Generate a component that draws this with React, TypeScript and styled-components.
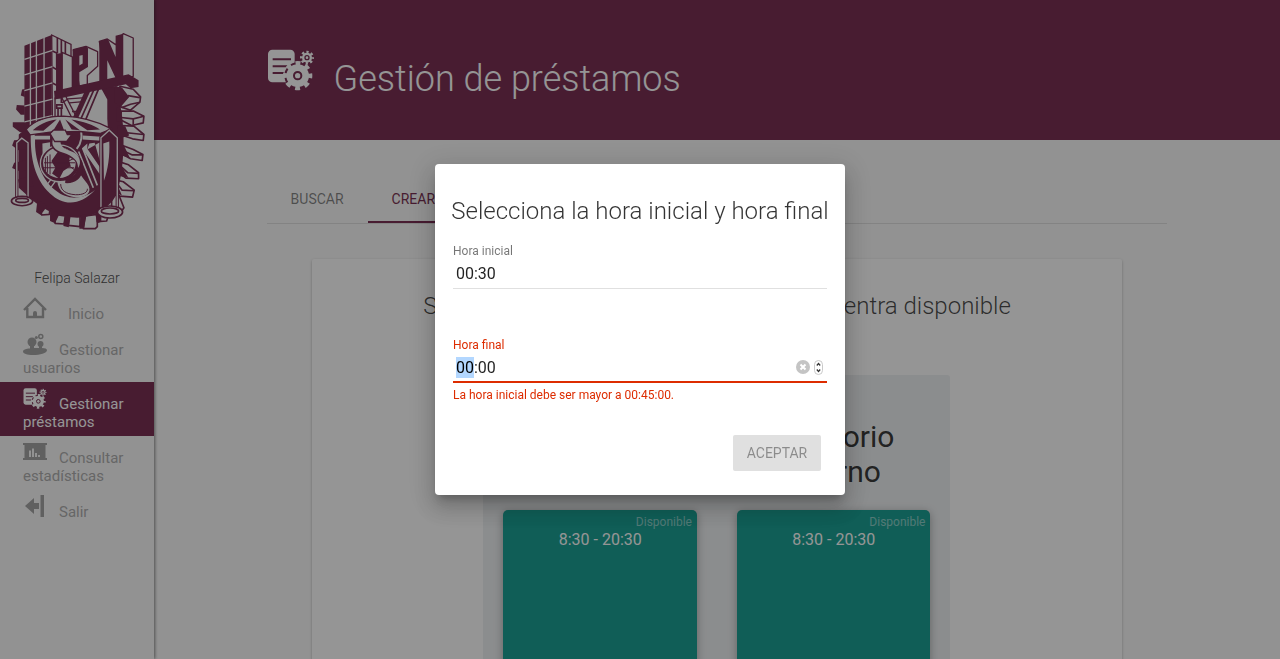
import React, { useEffect, useRef, useState } from "react";
import styled, { createGlobalStyle, css } from "styled-components";

const guinda = "#6b1740";
const paper = "#fafafa";
const danger = "#dd2c00";

const GlobalStyle = createGlobalStyle`
  *, *::before, *::after { box-sizing: border-box; }
  body {
    margin: 0;
    overflow: hidden;
    font-family: Roboto, "Liberation Sans", sans-serif;
    color: rgba(0, 0, 0, 0.87);
    background: ${paper};
  }
  h1, h2, h3, p { margin: 0; font-weight: 400; }
`;

const Shell = styled.div`
  display: grid;
  grid-template-columns: 154px 1fr;
  height: 100vh;
  overflow: hidden;
`;

const Sidebar = styled.aside`
  display: flex;
  flex-direction: column;
  background: ${paper};
  box-shadow: 1px 0 3px rgba(0, 0, 0, 0.5);
  z-index: 1;
`;

const LogoBox = styled.div`
  display: flex;
  justify-content: center;
  padding: 33px 0 37px;
`;

const UserName = styled.p`
  font-size: 14px;
  font-weight: 300;
  line-height: 20px;
  text-align: center;
  color: #3c3c3c;
`;

const Nav = styled.nav`
  display: flex;
  flex-direction: column;
  padding-top: 4px;
`;

const NavItem = styled.a<{ $active?: boolean; $wide?: boolean }>`
  padding: 5px 20px 5px 23px;
  font-size: 15px;
  line-height: 18px;
  text-decoration: none;
  color: ${(p) => (p.$active ? "#fff" : "#a6a6a6")};
  background: ${(p) => (p.$active ? guinda : "transparent")};
  svg {
    width: 24px;
    height: 24px;
    margin-right: ${(p) => (p.$wide ? 21 : 12)}px;
    vertical-align: -2px;
    color: ${(p) => (p.$active ? "#fff" : "#9a9a9a")};
  }
`;

const Main = styled.main`
  min-width: 0;
  overflow: hidden;
`;

const Banner = styled.header`
  height: 140px;
  padding: 49px 10% 0;
  display: flex;
  gap: 19px;
  color: #fff;
  background: ${guinda};
  svg { width: 48px; height: 44px; flex: none; }
`;

const BannerTitle = styled.h1`
  padding-top: 7px;
  font-size: 36px;
  font-weight: 300;
  line-height: 46px;
`;

const Content = styled.div`
  width: 80%;
  margin: 0 auto;
  padding-top: 35px;
`;

const Tabs = styled.div`
  display: flex;
  border-bottom: 1px solid #dcdcdc;
`;

const Tab = styled.button<{ $active?: boolean }>`
  height: 48px;
  padding: 2px 24px 0;
  border: 0;
  border-bottom: 2px solid ${(p) => (p.$active ? guinda : "transparent")};
  background: none;
  font: 400 14px/20px Roboto, sans-serif;
  color: ${(p) => (p.$active ? guinda : "rgba(0, 0, 0, 0.54)")};
`;

const Card = styled.section`
  width: 90%;
  margin: 35px auto 0;
  padding: 30px 0;
  display: flex;
  flex-direction: column;
  align-items: center;
  gap: 52px;
  border-radius: 2px;
  background: #fff;
  box-shadow: 0 1px 3px rgba(0, 0, 0, 0.3);
`;

const CardTitle = styled.h2`
  font-size: 24px;
  font-weight: 300;
  line-height: 34px;
  color: rgba(0, 0, 0, 0.8);
  white-space: nowrap;
`;

const Rooms = styled.div`
  width: 467px;
  padding: 44px 20px 0;
  display: grid;
  grid-template-columns: 1fr 1fr;
  gap: 40px;
  border-radius: 3px;
  background: #eceff1;
`;

const Room = styled.article`
  display: flex;
  flex-direction: column;
  align-items: stretch;
  gap: 21px;
`;

const RoomName = styled.h3`
  padding: 0 30px;
  font-size: 30px;
  line-height: 35px;
  text-align: center;
`;

const Slot = styled.div`
  height: 400px;
  padding: 4px 5px;
  border-radius: 5px;
  color: #fff;
  background: #009688;
  box-shadow: 0 2px 8px rgba(0, 0, 0, 0.35);
  text-align: center;
`;

const SlotState = styled.p`
  font-size: 12px;
  line-height: 16px;
  text-align: right;
  color: rgba(255, 255, 255, 0.5);
`;

const SlotTime = styled.p`
  font-size: 16px;
  line-height: 20px;
`;

const Scrim = styled.div`
  position: fixed;
  inset: 0;
  z-index: 5;
  display: flex;
  align-items: center;
  justify-content: center;
  background: rgba(33, 33, 33, 0.48);
`;

const Dialog = styled.form`
  width: 410px;
  max-width: 90vw;
  padding: 29px 18px 24px;
  border-radius: 4px;
  background: #fff;
  box-shadow: 0 7px 8px -4px rgba(0, 0, 0, 0.2), 0 13px 19px 2px rgba(0, 0, 0, 0.14),
    0 5px 24px 4px rgba(0, 0, 0, 0.12);
`;

const DialogTitle = styled.h2`
  margin: 0 -10px;
  font-size: 24px;
  font-weight: 300;
  line-height: 36px;
  text-align: center;
  white-space: nowrap;
  color: rgba(0, 0, 0, 0.8);
`;

const Field = styled.div<{ $invalid?: boolean }>`
  height: 94px;
  padding-top: 14px;
  label {
    display: block;
    font-size: 12px;
    line-height: 16px;
    color: ${(p) => (p.$invalid ? danger : "rgba(0, 0, 0, 0.54)")};
  }
`;

const InputRow = styled.div<{ $invalid?: boolean }>`
  display: flex;
  align-items: center;
  height: 30px;
  padding-right: 4px;
  border-bottom: ${(p) => (p.$invalid ? css`2px solid ${danger}` : css`1px solid #e0e0e0`)};
`;

const TimeInput = styled.input`
  flex: 1;
  min-width: 0;
  height: 21px;
  padding: 0 3px;
  border: 0;
  outline: 0;
  background: none;
  font: 400 16px/21px Roboto, sans-serif;
  color: rgba(0, 0, 0, 0.87);
  &::selection { background: #b3d7ff; color: #000; }
`;

const IconButton = styled.button`
  display: flex;
  margin-left: 4px;
  padding: 0;
  border: 0;
  background: none;
`;

const ErrorText = styled.p`
  font-size: 12px;
  line-height: 14px;
  padding-top: 5px;
  color: ${danger};
`;

const Actions = styled.div`
  display: flex;
  justify-content: flex-end;
  padding: 18px 6px 0;
`;

const Accept = styled.button`
  height: 36px;
  width: 88px;
  padding: 0;
  border: 0;
  border-radius: 2px;
  background: #e0e0e0;
  font: 400 14px/36px Roboto, sans-serif;
  color: rgba(0, 0, 0, 0.38);
`;

const CogsIcon = ({ hole }: { hole: string }) => (
  <svg viewBox="0 0 144 132" aria-hidden="true">
    <rect x="3" y="2" width="80" height="98" rx="13" fill="currentColor" />
    <path d="M17 31H72M17 52H62M17 72H50" stroke={hole} strokeWidth="6" />
    <circle cx="92" cy="80" r="40" fill={hole} />
    <circle cx="92" cy="80" r="34" fill="currentColor" />
    <circle cx="92" cy="80" r="37" fill="none" stroke="currentColor" strokeWidth="14" pathLength="80" strokeDasharray="5 5" strokeDashoffset="2.5" />
    <circle cx="92" cy="80" r="11" fill="currentColor" stroke={hole} strokeWidth="6" />
    <circle cx="120" cy="26" r="15" fill="currentColor" />
    <circle cx="120" cy="26" r="17" fill="none" stroke="currentColor" strokeWidth="8" pathLength="80" strokeDasharray="5 5" strokeDashoffset="2.5" />
    <circle cx="120" cy="26" r="6" fill="currentColor" stroke={hole} strokeWidth="4" />
  </svg>
);

const HomeIcon = () => (
  <svg viewBox="0 0 24 24" fill="none" stroke="currentColor" strokeWidth="2.400" aria-hidden="true">
    <path d="M1 13L12 2L23 13M4.300 11V20H20V11" />
    <path d="M10 20V16a2 2 0 0 1 4 0V20Z" fill="currentColor" stroke="none" />
  </svg>
);

const UsersIcon = () => (
  <svg viewBox="0 0 24 24" fill="currentColor" aria-hidden="true">
    <circle cx="9" cy="9" r="4.500" />
    <circle cx="17.500" cy="11" r="3" />
    <path d="M7 12h4v3h5v-2h3v2c3 0 5 .8 5 2.200C24 20 17 22 10 22C4 22 0 20.500 0 18.500C0 16.500 3 15.600 7 15.400Z" />
    <circle cx="17.800" cy="3.500" r="2" fill="none" stroke="currentColor" strokeWidth="1.500" />
    <circle cx="13.300" cy="4.500" r="1.500" />
  </svg>
);

const ChartIcon = () => (
  <svg viewBox="0 0 24 24" fill="currentColor" aria-hidden="true">
    <path d="M0 2H24V4H22.500V17H24V19H0V17H1.500V4H0Z" />
    <path d="M6 9.500H8V16H6ZM9 7.500H11V16H9ZM12 12H14V16H12ZM15 14H17V16H15Z" fill={paper} />
  </svg>
);

const ExitIcon = () => (
  <svg viewBox="0 0 24 24" fill="currentColor" aria-hidden="true">
    <path d="M2 11L11 3V8H16V14H11V19ZM17.500 0H21V22H17.500Z" />
  </svg>
);

const ClearIcon = () => (
  <svg width="14" height="14" viewBox="0 0 14 14" aria-hidden="true">
    <circle cx="7" cy="7" r="7" fill="#c4c4c4" />
    <path d="M4.500 4.500L9.500 9.500M9.500 4.500L4.500 9.500" stroke="#fff" strokeWidth="2" />
  </svg>
);

const StepperIcon = () => (
  <svg width="9" height="16" viewBox="0 0 9 16" fill="none" aria-hidden="true">
    <rect x=".5" y="1.500" width="8" height="14" rx="4" stroke="#c9c9c9" />
    <path d="M2.800 6.500L4.500 4.500L6.200 6.500M2.800 10.500L4.500 12.500L6.200 10.500" stroke="#333" strokeWidth="1.200" />
  </svg>
);

const range = (n: number) => Array.from({ length: n }, (_, i) => i);

const Crest = () => (
  <svg width="135" height="198" viewBox="30 40 405 595" role="img" aria-label="IPN">
    <g stroke={guinda} strokeWidth="5" strokeLinejoin="round" fill={paper}>
      {/* raised sides of the gear teeth */}
      <path d="M360 200L400 209L422 232L420 248L392 272L362 262Z" />
      <path d="M384 228L420 234M366 264L392 254L420 248" fill="none" />
      <path d="M364 275L402 275L432 290L430 310L395 318L360 300Z" />
      <path d="M364 294L400 298L432 290M400 298V316" fill="none" />
      <path d="M360 318L402 320L432 345L430 363L398 358L360 345Z" />
      <path d="M362 338L402 342L430 345" fill="none" />
      <path d="M360 375L400 390L429 405L427 423L392 418L360 400Z" />
      <path d="M370 394L396 406L428 406" fill="none" />
      <path d="M352 425L386 436L416 460V478L378 476L350 455Z" />
      <path d="M362 440L384 460L416 462" fill="none" />
      <path d="M340 480L370 487L403 512L398 533L360 530L335 510Z" />
      <path d="M350 490L366 512L402 514" fill="none" />
      <path d="M335 525L358 530L372 565L362 580L335 575Z" />
      <path d="M118 560L150 565L148 585L125 587Z" />
      <path d="M165 585L196 590L192 614L165 612Z" />
      <path d="M208 590L240 590V622L205 618Z" />
      <path d="M255 590L292 585V622L286 628H250Z" />
      <path d="M292 585L325 590L320 605L292 607Z" />
      <path d="M60 490L92 495V512L66 508Z" />
    </g>
    <g fill={guinda}>
      {/* gear body and its front teeth */}
      <path d="M74 225V330L56 345V505L100 545C135 575 180 594 232 595C290 592 335 560 352 520C376 430 375 330 362 262L352 200H300L322 240V330L232 300L160 310Z" />
      <path d="M74 208L66 210L62 228L74 232ZM74 258L50 256L48 270L62 286H74ZM74 308L38 308V322L60 338L90 335ZM90 360L42 362L36 378L55 392L92 388ZM90 420L42 430L36 446L60 456L95 450ZM92 470L54 480L58 500L78 504L100 500Z" />
      <path d="M112 540L108 578L122 587L142 560ZM150 565V605L165 612L178 585ZM195 585L190 620L206 624L212 590ZM242 588L238 628H252L260 585ZM285 580L292 612L304 607L305 570Z" />
      <path d="M345 200L366 204L388 232L362 262L345 250ZM350 262L366 276L360 306L350 305ZM352 318L376 320L388 348L355 358ZM355 365L372 378L390 416L352 404ZM345 425L362 436L386 476L350 468ZM330 490L350 490L366 528L335 515Z" />
    </g>
    {/* shield rim and the panels inside it */}
    <path d="M92 335C90 420 105 480 150 522C190 560 240 560 285 512C250 540 205 545 165 512C125 480 103 420 105 360H150V349H104V335Z" fill={paper} />
    <path d="M248 348L305 352V364L248 360Z" fill={paper} />
    <path d="M127 372L150 368V400L128 420Z" fill={paper} />
    <path d="M268 372L284 370L304 440V400L300 368L262 390ZM310 372L328 366C330 410 324 450 312 484Z" fill={paper} />
    <path d="M236 396L280 505M248 386L292 498" stroke={paper} strokeWidth="5" />
    <path d="M262 372L246 386L303 470V448L262 388Z" fill={paper} />
    <path d="M137 500L158 474M150 508L170 480" stroke={paper} strokeWidth="4" />
    <path d="M172 470C168 510 190 530 228 534C255 536 276 522 266 500C255 480 238 470 236 446L190 486Z" fill={paper} />
    <path d="M182 494C182 512 196 524 226 526C250 527 264 518 262 508" fill="none" stroke={guinda} strokeWidth="3" />
    {/* trestle between the slab and the scales */}
    <path d="M162 232L298 200L316 240L324 330L232 318L162 320Z" fill={paper} />
    <g fill="none" stroke={guinda}>
      <path d="M184 232L216 296M198 232L228 290M186 250L204 238L258 234M208 250L250 246M216 276H238" strokeWidth="4" />
      <path d="M264 212L224 300" strokeWidth="15" />
      <path d="M282 210L240 304M296 208L254 308" strokeWidth="5" />
      <path d="M170 234H184V250M170 256H186V266H170ZM174 266V305M184 266V305" strokeWidth="5" />
    </g>
    {/* globe and serpent */}
    <ellipse cx="180" cy="432" rx="59" ry="55" fill={guinda} stroke={paper} strokeWidth="4" />
    <ellipse cx="178" cy="430" rx="49" ry="46" fill={paper} />
    <path d="M174 396L190 382L210 402L208 425L212 440L190 455L178 478L156 462L166 445L154 425Z" fill={guinda} />
    <path d="M132 430H226M130 445H222M142 410V460M150 405V465M136 415V455M205 425L226 415M208 440L222 450" stroke={guinda} strokeWidth="3" />
    <path d="M168 350C152 374 165 388 192 397C225 410 243 420 240 448C238 470 222 484 196 482" fill="none" stroke={guinda} strokeWidth="18" />
    <path d="M162 350C148 378 165 392 190 400C220 410 235 424 234 446C246 430 240 404 215 396C192 388 178 380 182 360L196 350Z" fill={paper} />
    <path d="M238 325C250 345 244 372 230 388" fill="none" stroke={paper} strokeWidth="6" />
    {/* tower */}
    <path d="M73 78L155 46V302L73 330Z" fill={guinda} />
    <path d="M155 46L213 74V215L165 235V300H157Z" fill={paper} stroke={guinda} strokeWidth="4" />
    <path d="M157 94L170 100V150L157 142M157 190L170 197M172 54V100M184 60V100M196 66V104" fill="none" stroke={guinda} strokeWidth="5" />
    <g stroke={paper} strokeWidth="4">
      {range(5).map((i) => (
        <path key={i} d={`M73 ${119 + i * 47}L157 ${92 + i * 49}`} />
      ))}
      <path d="M91 66V325M109 60V320M132 50V312" />
    </g>
    {/* scales */}
    <path d="M78 330C105 300 150 290 190 290C250 292 300 310 335 328L300 342L240 336L150 338L90 346Z" fill={paper} stroke={guinda} strokeWidth="4" />
    <path d="M98 332C125 308 155 302 170 300L130 334ZM180 300L160 332H192ZM196 300L215 330L240 332ZM214 300C250 306 280 316 300 330L262 332Z" fill={guinda} />
    <path d="M150 342L160 332H196L202 345H216L200 366H164Z" fill={paper} stroke={guinda} strokeWidth="4" />
    <g fill="none">
      <path d="M50 540V370L65 356L84 370V535M303 570V355L328 332L352 355V565" stroke={guinda} strokeWidth="10" />
      <path d="M50 540V370L65 356L84 370V535M303 570V355L328 332L352 355V565" stroke={paper} strokeWidth="4" />
    </g>
    <g fill={paper} stroke={guinda} strokeWidth="5">
      <ellipse cx="66" cy="545" rx="32" ry="14" />
      <ellipse cx="66" cy="543" rx="19" ry="6" />
      <ellipse cx="330" cy="578" rx="38" ry="18" />
      <ellipse cx="330" cy="575" rx="26" ry="9" />
    </g>
    {/* raised blocks on top of the slab */}
    <g fill={paper} stroke={guinda} strokeWidth="4" strokeLinejoin="round">
      <path d="M186 98L217 112V208L186 214Z" />
      <path d="M220 90L258 80L293 96V140L262 168V195L238 200Z" />
      <path d="M298 65L322 58L347 75L370 42L400 55V170L370 180L320 190Z" />
    </g>
    <g fill={guinda}>
      <path d="M168 103L188 99V216L168 220Z" />
      <path fillRule="evenodd" d="M218 90L258 80L264 86V142L238 158V204L218 208ZM238 108V138L248 132V106Z" />
      <path d="M298 65L324 58L347 112V48L370 42V176L350 182L322 122V190L298 196Z" />
      <path d="M162 214L386 164L416 182V202L392 206L378 194L164 240Z" />
    </g>
  </svg>
);

export default function App() {
  const [start, setStart] = useState("00:30");
  const [end, setEnd] = useState("00:00");
  const endRef = useRef<HTMLInputElement>(null);

  useEffect(() => {
    endRef.current?.focus();
    endRef.current?.setSelectionRange(0, 2);
  }, []);

  return (
    <>
      <GlobalStyle />
      <Shell>
        <Sidebar>
          <LogoBox><Crest /></LogoBox>
          <UserName>Felipa Salazar</UserName>
          <Nav>
            <NavItem href="#inicio" $wide><HomeIcon />Inicio</NavItem>
            <NavItem href="#usuarios"><UsersIcon />Gestionar usuarios</NavItem>
            <NavItem href="#prestamos" $active><CogsIcon hole={guinda} />Gestionar préstamos</NavItem>
            <NavItem href="#estadisticas"><ChartIcon />Consultar estadísticas</NavItem>
            <NavItem href="#salir"><ExitIcon />Salir</NavItem>
          </Nav>
        </Sidebar>
        <Main>
          <Banner>
            <CogsIcon hole={guinda} />
            <BannerTitle>Gestión de préstamos</BannerTitle>
          </Banner>
          <Content>
            <Tabs>
              <Tab type="button">BUSCAR</Tab>
              <Tab type="button" $active>CREAR</Tab>
            </Tabs>
            <Card>
              <CardTitle>Selecciona el laboratorio en que se encuentra disponible</CardTitle>
              <Rooms>
                {["Auditorio Externo", "Auditorio Interno"].map((name) => (
                  <Room key={name}>
                    <RoomName>{name}</RoomName>
                    <Slot>
                      <SlotState>Disponible</SlotState>
                      <SlotTime>8:30 - 20:30</SlotTime>
                    </Slot>
                  </Room>
                ))}
              </Rooms>
            </Card>
          </Content>
        </Main>
      </Shell>
      <Scrim>
        <Dialog role="dialog" aria-labelledby="dialog-title">
          <DialogTitle id="dialog-title">Selecciona la hora inicial y hora final</DialogTitle>
          <Field>
            <label htmlFor="start">Hora inicial</label>
            <InputRow>
              <TimeInput id="start" value={start} onChange={(e) => setStart(e.target.value)} />
            </InputRow>
          </Field>
          <Field $invalid>
            <label htmlFor="end">Hora final</label>
            <InputRow $invalid>
              <TimeInput id="end" ref={endRef} value={end} onChange={(e) => setEnd(e.target.value)} />
              <IconButton type="button" aria-label="Borrar" onClick={() => setEnd("")}><ClearIcon /></IconButton>
              <IconButton type="button" aria-label="Ajustar"><StepperIcon /></IconButton>
            </InputRow>
            <ErrorText>La hora inicial debe ser mayor a 00:45:00.</ErrorText>
          </Field>
          <Actions>
            <Accept type="submit" disabled>ACEPTAR</Accept>
          </Actions>
        </Dialog>
      </Scrim>
    </>
  );
}
